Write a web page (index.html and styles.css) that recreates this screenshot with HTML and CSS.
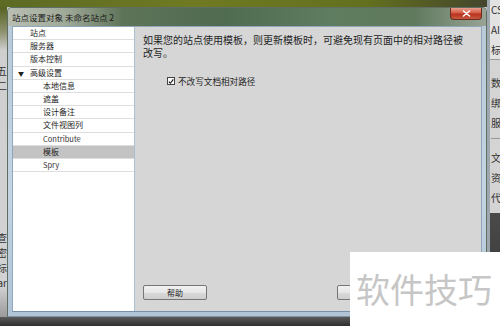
FILE: index.html
```html
<!DOCTYPE html>
<html lang="zh-CN">
<head>
<meta charset="utf-8">
<title>站点设置对象</title>
<link rel="stylesheet" href="styles.css">
</head>
<body>
<div class="screen">
  <div class="bg-top"></div>
  <div class="side-right">
    <div class="sr-top">
      <div class="sr-item">CS</div>
      <div class="sr-item">AI</div>
      <div class="sr-item">标</div>
    </div>
    <div class="sr-mid">
      <div class="sr-item">数</div>
      <div class="sr-item">绑</div>
      <div class="sr-item">服</div>
      <div class="sr-sep"></div>
      <div class="sr-item">文</div>
      <div class="sr-item">资</div>
      <div class="sr-item">代</div>
    </div>
    <div class="sr-dark"></div>
  </div>
  <div class="side-left">
    <div class="sl-frag">五</div>
    <div class="sl-frag">二</div>
    <div class="sl-spacer"></div>
    <div class="sl-frag">查</div>
    <div class="sl-frag">密</div>
    <div class="sl-frag">标</div>
    <div class="sl-frag">ar</div>
  </div>
  <div class="dialog">
    <div class="titlebar">
      <span class="title">站点设置对象 未命名站点 2</span>
      <span class="close">
        <svg width="9" height="7" viewBox="0 0 9 7"><path d="M1.5 1 L7.5 6 M7.5 1 L1.5 6" stroke="#fff" stroke-width="1.6" stroke-linecap="round"/></svg>
      </span>
    </div>
    <div class="dialog-body">
      <ul class="nav">
        <li class="row">站点</li>
        <li class="row">服务器</li>
        <li class="row">版本控制</li>
        <li class="row group"><span class="tri">▼</span>高级设置</li>
        <li class="row sub">本地信息</li>
        <li class="row sub">遮盖</li>
        <li class="row sub">设计备注</li>
        <li class="row sub">文件视图列</li>
        <li class="row sub latin">Contribute</li>
        <li class="row sub selected">模板</li>
        <li class="row sub latin">Spry</li>
      </ul>
      <div class="panel">
        <p class="desc">如果您的站点使用模板，则更新模板时，可避免现有页面中的相对路径被改写。</p>
        <label class="check">
          <span class="box"><svg width="7" height="7" viewBox="0 0 7 7"><path d="M1 3.6 L2.8 5.6 L6.2 1" fill="none" stroke="#111" stroke-width="1.2"/></svg></span>
          <span class="check-label">不改写文档相对路径</span>
        </label>
        <div class="footer">
          <button class="btn">帮助</button>
          <button class="btn" aria-label="确定"></button>
        </div>
      </div>
    </div>
  </div>
  <div class="bg-bottom"></div>
  <div class="watermark">软件技巧</div>
</div>
</body>
</html>
```
FILE: styles.css
```css
* { box-sizing: border-box; }
html, body { margin: 0; padding: 0; }
body {
  width: 500px;
  height: 326px;
  overflow: hidden;
  font-family: "Noto Sans CJK SC", "Noto Sans", sans-serif;
  color: #1e1e1e;
}
.screen {
  position: relative;
  width: 500px;
  height: 326px;
  display: grid;
  grid-template-columns: 7px 480px 13px;
  grid-template-rows: 7px 310px 9px;
  background: #c9c9c9;
}
.bg-top {
  grid-column: 1 / 3;
  grid-row: 1;
  background: linear-gradient(to right, #5c6a24 0%, #6f7a22 40%, #63701e 75%, #44462c 100%);
}
.bg-bottom {
  grid-column: 1 / 3;
  grid-row: 3;
  background: linear-gradient(to bottom, #5a5a5a, #2e2e2e);
}
.side-left {
  grid-column: 1;
  grid-row: 2;
  background: linear-gradient(to bottom, #556220 0%, #8f9170 8%, #cfcfcf 14%, #d2d2d2 90%, #9a9a9a 100%);
  display: flex;
  flex-direction: column;
  padding-top: 56px;
  overflow: hidden;
}
.sl-frag {
  display: flex;
  justify-content: flex-end;
  font-size: 10px;
  line-height: 15px;
  height: 15px;
  color: #333;
  overflow: hidden;
  white-space: nowrap;
}
.sl-spacer { height: 137px; flex: none; }
.side-right {
  grid-column: 3;
  grid-row: 1 / 4;
  display: flex;
  flex-direction: column;
  overflow: hidden;
  border-left: 3px solid #9fa7ae;
}
.sr-top {
  background: #e2e2e2;
  height: 60px;
  padding: 0 0 0 1px;
  border-bottom: 1px solid #999;
}
.sr-mid {
  background: #d4d4d4;
  height: 153px;
  padding: 13px 0 0 1px;
}
.sr-item {
  font-size: 10px;
  line-height: 20px;
  height: 20px;
  white-space: nowrap;
  color: #333;
}
.sr-sep { height: 1px; background: #999; margin: 5px 0 9px; }
.sr-dark { flex: 1; background: linear-gradient(to bottom, #4a4a4a, #333); }

.dialog {
  grid-column: 2;
  grid-row: 2 / 4;
  height: 310px;
  display: flex;
  flex-direction: column;
  background: linear-gradient(to bottom, #b8c8d6, #c4d4e2 60%, #b0c4d6);
  border-radius: 5px 5px 0 0;
  border: 1px solid #5e6e62;
  border-bottom-color: #7f93a4;
}
.titlebar {
  height: 18px;
  display: flex;
  align-items: flex-start;
  padding-left: 4px;
  padding-right: 4px;
  background: linear-gradient(to right, #b8beb2 0%, #a0aa98 12%, #5e7459 24%, #4f6b50 45%, #5f7d60 68%, #607a5e 85%, #98a394 100%);
  border-radius: 4px 4px 0 0;
}
.title {
  font-size: 8.5px;
  line-height: 18px;
  color: #1a1a1a;
  white-space: nowrap;
}
.close {
  margin-left: auto;
  width: 32px;
  height: 12px;
  display: flex;
  align-items: center;
  justify-content: center;
  background: linear-gradient(to bottom, #e8a090 0%, #d45a44 45%, #b8321e 55%, #c85a40 100%);
  border: 1px solid #6c2a20;
  border-top: none;
  border-radius: 0 0 4px 4px;
}
.dialog-body {
  flex: 1;
  display: flex;
  margin: 0 4px 4px 4px;
  border: 1px solid #8fa6bc;
  border-bottom-color: #7890a8;
}
.nav {
  list-style: none;
  margin: 0;
  padding: 0;
  width: 122px;
  flex: none;
  background: #fff;
  border-right: 1px solid #a9bfd2;
}
.row {
  height: 13.2px;
  line-height: 12.2px;
  border-bottom: 1px solid #dedede;
  font-size: 8px;
  padding-left: 17px;
  color: #1e1e1e;
  white-space: nowrap;
  position: relative;
}
.row.group { padding-left: 5px; }
.tri { font-size: 6px; display: inline-block; width: 12px; }
.row.sub { padding-left: 30px; }
.row.latin { font-size: 7.5px; color: #333; }
.row.selected { background: #c3c3c3; }
.panel {
  flex: 1;
  background: #d6d6d6;
  display: flex;
  flex-direction: column;
  padding: 0 0 11px 8px;
}
.desc {
  margin: 6px 0 0 0;
  width: 326px;
  font-size: 10px;
  line-height: 13px;
  color: #1e1e1e;
}
.check {
  display: flex;
  align-items: center;
  margin: 17px 0 0 24px;
  height: 10px;
}
.box {
  width: 8px;
  height: 8px;
  border: 1px solid #444;
  background: #fafafa;
  display: flex;
  align-items: center;
  justify-content: center;
}
.check-label {
  margin-left: 3px;
  font-size: 8.6px;
  line-height: 10px;
  color: #1e1e1e;
}
.footer {
  margin-top: auto;
  display: flex;
  gap: 130px;
}
.btn {
  width: 64px;
  height: 15px;
  padding: 0;
  font-family: "Noto Sans CJK SC", sans-serif;
  font-size: 8px;
  line-height: 13px;
  color: #1e1e1e;
  border: 1px solid #767676;
  border-radius: 2px;
  background: linear-gradient(to bottom, #f2f2f2 0%, #e6e6e6 50%, #d8d8d8 51%, #cfcfcf 100%);
}
.watermark {
  position: absolute;
  left: 350px;
  top: 252px;
  width: 150px;
  height: 74px;
  background: #fff;
  color: #c6c6c6;
  font-size: 34px;
  line-height: 74px;
  padding-left: 6px;
  white-space: nowrap;
  letter-spacing: 0;
}
```
